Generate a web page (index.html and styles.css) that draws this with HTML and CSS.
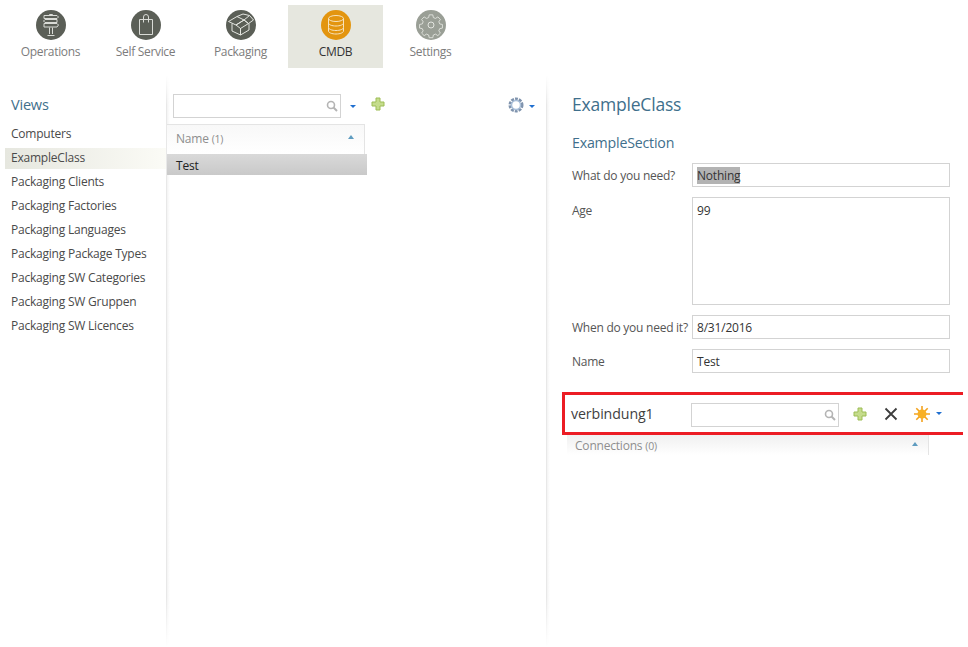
FILE: index.html
```html
<!DOCTYPE html>
<html lang="en">
<head>
<meta charset="utf-8">
<title>CMDB</title>
<link rel="stylesheet" href="styles.css">
</head>
<body>
<nav class="topnav">
  <div class="navitem">
    <svg class="navicon" viewBox="0 0 30 30"><circle cx="15" cy="15" r="15" fill="#5b5f57"/><g fill="none" stroke="#d9dbd6" stroke-width="1"><path d="M13.500 6V4.500h3V6M13.500 17.500V24M16.500 17.500V24M11.500 25.500h7"/><path d="M8 5.500h13l1.500 1.500L21 8.500H8z"/><path d="M21 9.500H9L7.500 11 9 12.500h12z"/><path d="M8 13.500h13l1.500 1.500-1.500 2H8z"/></g></svg>
    <span class="navlabel">Operations</span>
  </div>
  <div class="navitem">
    <svg class="navicon" viewBox="0 0 30 30"><circle cx="15" cy="15" r="15" fill="#5b5f57"/><g fill="none" stroke="#d9dbd6" stroke-width="1"><path d="M8.500 9.500h13v15h-13z"/><path d="M12.500 12.500V7a2.500 2.500 0 0 1 5 0v5.500"/></g></svg>
    <span class="navlabel">Self Service</span>
  </div>
  <div class="navitem">
    <svg class="navicon" viewBox="0 0 30 30"><circle cx="15" cy="15" r="15" fill="#5b5f57"/><g fill="none" stroke="#e4e6e1" stroke-width="1"><path d="M2.500 11.500L11 6.500l7 3.500-8 5z"/><path d="M18 10l5.500-4.500 4 4.500-5 3.500zM10 15l8-5 4.500 3.500-8 5z"/><path d="M6 13.500V21l8.500 4v-7M14.500 25l8.500-5v-6.500"/><path d="M11 6.500L17 4l6.500 1.500"/></g></svg>
    <span class="navlabel">Packaging</span>
  </div>
  <div class="navitem navitem-active">
    <svg class="navicon" viewBox="0 0 30 30"><circle cx="15" cy="15" r="15" fill="#e3950f"/><g fill="none" stroke="#f7e3bd" stroke-width="1"><ellipse cx="15" cy="8.500" rx="7.500" ry="3"/><path d="M7.500 8.500v4.500c0 1.700 3.400 3 7.500 3s7.500-1.300 7.500-3V8.500"/><path d="M7.500 13v4.500c0 1.700 3.400 3 7.500 3s7.500-1.300 7.500-3V13"/><path d="M7.500 17.500V21c0 1.700 3.400 3 7.500 3s7.500-1.300 7.500-3v-3.500"/></g></svg>
    <span class="navlabel">CMDB</span>
  </div>
  <div class="navitem">
    <svg class="navicon" viewBox="0 0 30 30"><circle cx="15" cy="15" r="15" fill="#9a9f96"/><g fill="none" stroke="#e2e4df" stroke-width="1"><circle cx="15" cy="15" r="3"/><path d="M13 4.500h4l.6 3 2.400 1 2.600-1.700 2.800 2.800-1.700 2.600 1 2.400 3 .6v4l-3 .6-1 2.400 1.700 2.600-2.800 2.800-2.600-1.700-2.400 1-.6 3h-4l-.6-3-2.400-1-2.600 1.700-2.800-2.800 1.700-2.600-1-2.400-3-.6v-4l3-.6 1-2.400-1.700-2.600 2.800-2.800 2.600 1.700 2.400-1z" transform="translate(1.500 .8) scale(.9)"/></g></svg>
    <span class="navlabel">Settings</span>
  </div>
</nav>

<main class="columns">
  <aside class="views">
    <h2 class="views-title">Views</h2>
    <ul class="views-list">
      <li class="view">Computers</li>
      <li class="view view-active">ExampleClass</li>
      <li class="view">Packaging Clients</li>
      <li class="view">Packaging Factories</li>
      <li class="view">Packaging Languages</li>
      <li class="view">Packaging Package Types</li>
      <li class="view">Packaging SW Categories</li>
      <li class="view">Packaging SW Gruppen</li>
      <li class="view">Packaging SW Licences</li>
    </ul>
  </aside>

  <section class="listpane">
    <div class="toolbar">
      <div class="search search-list">
        <svg class="search-icon" viewBox="0 0 12 12"><circle cx="5" cy="5" r="3.500" fill="none" stroke="#b4b4b4" stroke-width="1.600"/><path d="M7.500 7.500l3.500 3.500" stroke="#b4b4b4" stroke-width="2"/></svg>
      </div>
      <span class="caret caret-list"></span>
      <svg class="plus plus-list" viewBox="0 0 14 14"><path d="M5 1h4v4h4v4H9v4H5V9H1V5h4z" fill="#c5dc8c" stroke="#9dbd55"/></svg>
      <svg class="cog" viewBox="0 0 16 16"><circle cx="8" cy="8" r="6" fill="none" stroke="#7f93ad" stroke-width="3" stroke-dasharray="2.800 1"/><circle cx="8" cy="8" r="4.500" fill="none" stroke="#a9bfd9" stroke-width="1.500"/><circle cx="8" cy="8" r="3" fill="#fff"/></svg>
      <span class="caret"></span>
    </div>
    <div class="gridhead">
      <span class="gridhead-label">Name <small class="count">(1)</small></span>
      <span class="sortmark"></span>
    </div>
    <div class="gridrow">Test</div>
  </section>

  <section class="detail">
    <h1 class="detail-title">ExampleClass</h1>
    <h2 class="section-title">ExampleSection</h2>
    <div class="fields">
      <div class="field">
        <span class="label">What do you need?</span>
        <div class="input"><span class="selected">Nothing</span></div>
      </div>
      <div class="field">
        <span class="label label-age">Age</span>
        <div class="input input-area">99</div>
      </div>
      <div class="field">
        <span class="label">When do you need it?</span>
        <div class="input">8/31/2016</div>
      </div>
      <div class="field">
        <span class="label">Name</span>
        <div class="input">Test</div>
      </div>
    </div>
    <div class="relation">
      <span class="relation-name">verbindung1</span>
      <div class="search search-rel">
        <svg class="search-icon" viewBox="0 0 12 12"><circle cx="5" cy="5" r="3.500" fill="none" stroke="#b4b4b4" stroke-width="1.600"/><path d="M7.500 7.500l3.500 3.500" stroke="#b4b4b4" stroke-width="2"/></svg>
      </div>
      <svg class="plus plus-rel" viewBox="0 0 14 14"><path d="M5 1h4v4h4v4H9v4H5V9H1V5h4z" fill="#c5dc8c" stroke="#9dbd55"/></svg>
      <svg class="cross" viewBox="0 0 14 14"><path d="M1.500 1.500l11 11M12.500 1.500l-11 11" stroke="#3c3c3c" stroke-width="1.800"/></svg>
      <svg class="sun" viewBox="0 0 16 16"><g stroke="#f3a21e" stroke-width="1.600"><path d="M8 0v16M0 8h16M2.300 2.300l11.400 11.400M13.700 2.300L2.300 13.700"/></g><circle cx="8" cy="8" r="4.500" fill="#f8b025"/></svg>
      <span class="caret"></span>
    </div>
    <div class="connhead">
      <span class="gridhead-label">Connections <small class="count">(0)</small></span>
      <span class="sortmark"></span>
    </div>
  </section>
</main>
</body>
</html>
```
FILE: styles.css
```css
* { box-sizing: border-box; }
html, body { margin: 0; padding: 0; }
body {
  width: 968px;
  height: 647px;
  overflow: hidden;
  background: #fff;
  font-family: "Open Sans", "Noto Sans", sans-serif;
  font-size: 12px;
  letter-spacing: -0.2px;
  color: #4a4a4a;
}
.topnav {
  display: flex;
  padding: 5px 0 0 3px;
  height: 68px;
}
.navitem {
  width: 95px;
  height: 63px;
  display: flex;
  flex-direction: column;
  align-items: center;
  padding-top: 5px;
  gap: 4px;
}
.navitem-active { background: #e6e7df; }
.navicon { width: 30px; height: 30px; display: block; }
.navlabel { font-size: 12px; line-height: 16px; letter-spacing: -0.32px; color: #7c7c7c; }
.navitem-active .navlabel { color: #333; }

.columns {
  display: flex;
  height: 572px;
  margin-top: 7px;
}
.views,
.listpane {
  position: relative;
}
.views::after,
.listpane::after {
  content: "";
  position: absolute;
  top: 0;
  bottom: 0;
  right: -4px;
  width: 4px;
  background: linear-gradient(90deg, #e2e2e2, #f6f6f6 40%, #fff);
  -webkit-mask-image: linear-gradient(#0000, #000 30px, #000 calc(100% - 50px), #0000);
  mask-image: linear-gradient(#0000, #000 30px, #000 calc(100% - 50px), #0000);
  z-index: 0;
}
.views {
  width: 166px;
  padding: 20px 0 0 5px;
  flex: none;
}
.views-title {
  margin: 0 0 7px 6px;
  font-size: 14.500px;
  font-weight: 400;
  line-height: 20px;
  color: #3f6f8c;
}
.views-list { list-style: none; margin: 0; padding: 0; }
.view {
  height: 24px;
  line-height: 24px;
  padding-left: 6px;
  letter-spacing: -0.22px;
  color: #4a4a4a;
}
.view-active {
  height: 21px;
  line-height: 20px;
  margin: 1.500px 0;
  background: linear-gradient(90deg, #e6e7df, #fbfbf6);
}

.listpane {
  width: 380px;
  flex: none;
  padding-left: 1px;
  display: flex;
  flex-direction: column;
}
.toolbar {
  display: flex;
  align-items: center;
  padding: 19px 11px 0 6px;
  height: 43px;
  position: relative;
  z-index: 1;
}
.search {
  border: 1px solid #d3d3d3;
  height: 24px;
  position: relative;
  background: #fff;
}
.search-list { width: 168px; }
.search-icon {
  position: absolute;
  right: 2px;
  top: 5px;
  width: 12px;
  height: 12px;
}
.caret {
  width: 0;
  height: 0;
  border: 3px solid transparent;
  border-top: 3px solid #1f6fd0;
  border-bottom: 0;
  display: block;
}
.caret-list { margin-left: 9px; }
.plus { width: 14px; height: 14px; display: block; }
.plus-list { margin-left: 15px; position: relative; top: -2px; }
.cog { width: 16px; height: 16px; margin: 0 5px 0 auto; display: block; position: relative; top: -1px; }

.gridhead {
  display: flex;
  justify-content: space-between;
  width: 198px;
  height: 30px;
  margin-top: 6px;
  border-top: 1px solid #e4e4e4;
  border-right: 1px solid #e4e4e4;
  background: linear-gradient(#f8f8f8, #fff);
  padding: 6px 10px 0 9px;
  position: relative;
  z-index: 1;
}
.gridhead-label { color: #8e8e8e; font-size: 12px; line-height: 16px; }
.count { font-size: 10.500px; }
.sortmark {
  width: 0;
  height: 0;
  margin-top: 4px;
  border: 3.500px solid transparent;
  border-bottom: 4px solid #5f9cc0;
  border-top: 0;
}
.gridrow {
  width: 200px;
  height: 21px;
  line-height: 23px;
  padding-left: 9px;
  color: #222;
  background: linear-gradient(#d9d9d9, #c9c9c9);
  position: relative;
  z-index: 1;
}

.detail {
  flex: 1;
  padding: 0 0 0 16px;
  position: relative;
  z-index: 1;
}
.detail-title {
  margin: 17px 0 0 10px;
  font-size: 17.500px;
  font-weight: 400;
  line-height: 24px;
  color: #3f6f8c;
}
.section-title {
  margin: 17px 0 0 10px;
  font-size: 14.200px;
  font-weight: 400;
  line-height: 20px;
  color: #3f6f8c;
}
.fields {
  margin: 10px 0 0 10px;
  display: flex;
  flex-direction: column;
  gap: 10px;
}
.field { display: flex; width: 378px; align-items: flex-start; }
.label { width: 120px; height: 24px; padding-top: 1px; line-height: 23px; color: #555; flex: none; letter-spacing: -0.25px; }
.label-age { line-height: 25px; }
.input {
  flex: 1;
  height: 24px;
  line-height: 23px;
  border: 1px solid #d3d3d3;
  padding-left: 4px;
  color: #333;
}
.input-area { height: 108px; line-height: 25px; }
.selected { background: #b3b3b3; }
.relation {
  display: flex;
  align-items: center;
  width: 401px;
  height: 43px;
  margin-top: 19px;
  border: 3px solid #ec1c24;
  border-right: 0;
  padding-left: 6px;
}
.relation-name {
  width: 120px;
  font-size: 14.200px;
  letter-spacing: -0.1px;
  color: #3f3f3f;
  flex: none;
}
.search-rel { width: 148px; margin-top: 2px; }
.plus-rel { margin-left: 14px; }
.cross { width: 14px; height: 14px; margin-left: 17px; display: block; }
.sun { width: 16px; height: 16px; margin-left: 16px; display: block; }
.relation .caret { margin-left: 6px; }
.connhead {
  display: flex;
  justify-content: space-between;
  width: 362px;
  height: 20px;
  margin: 0 0 0 5px;
  border-right: 1px solid #e4e4e4;
  background: linear-gradient(#f0f0f0, #fff);
  padding: 3px 10px 0 8px;
}
```
